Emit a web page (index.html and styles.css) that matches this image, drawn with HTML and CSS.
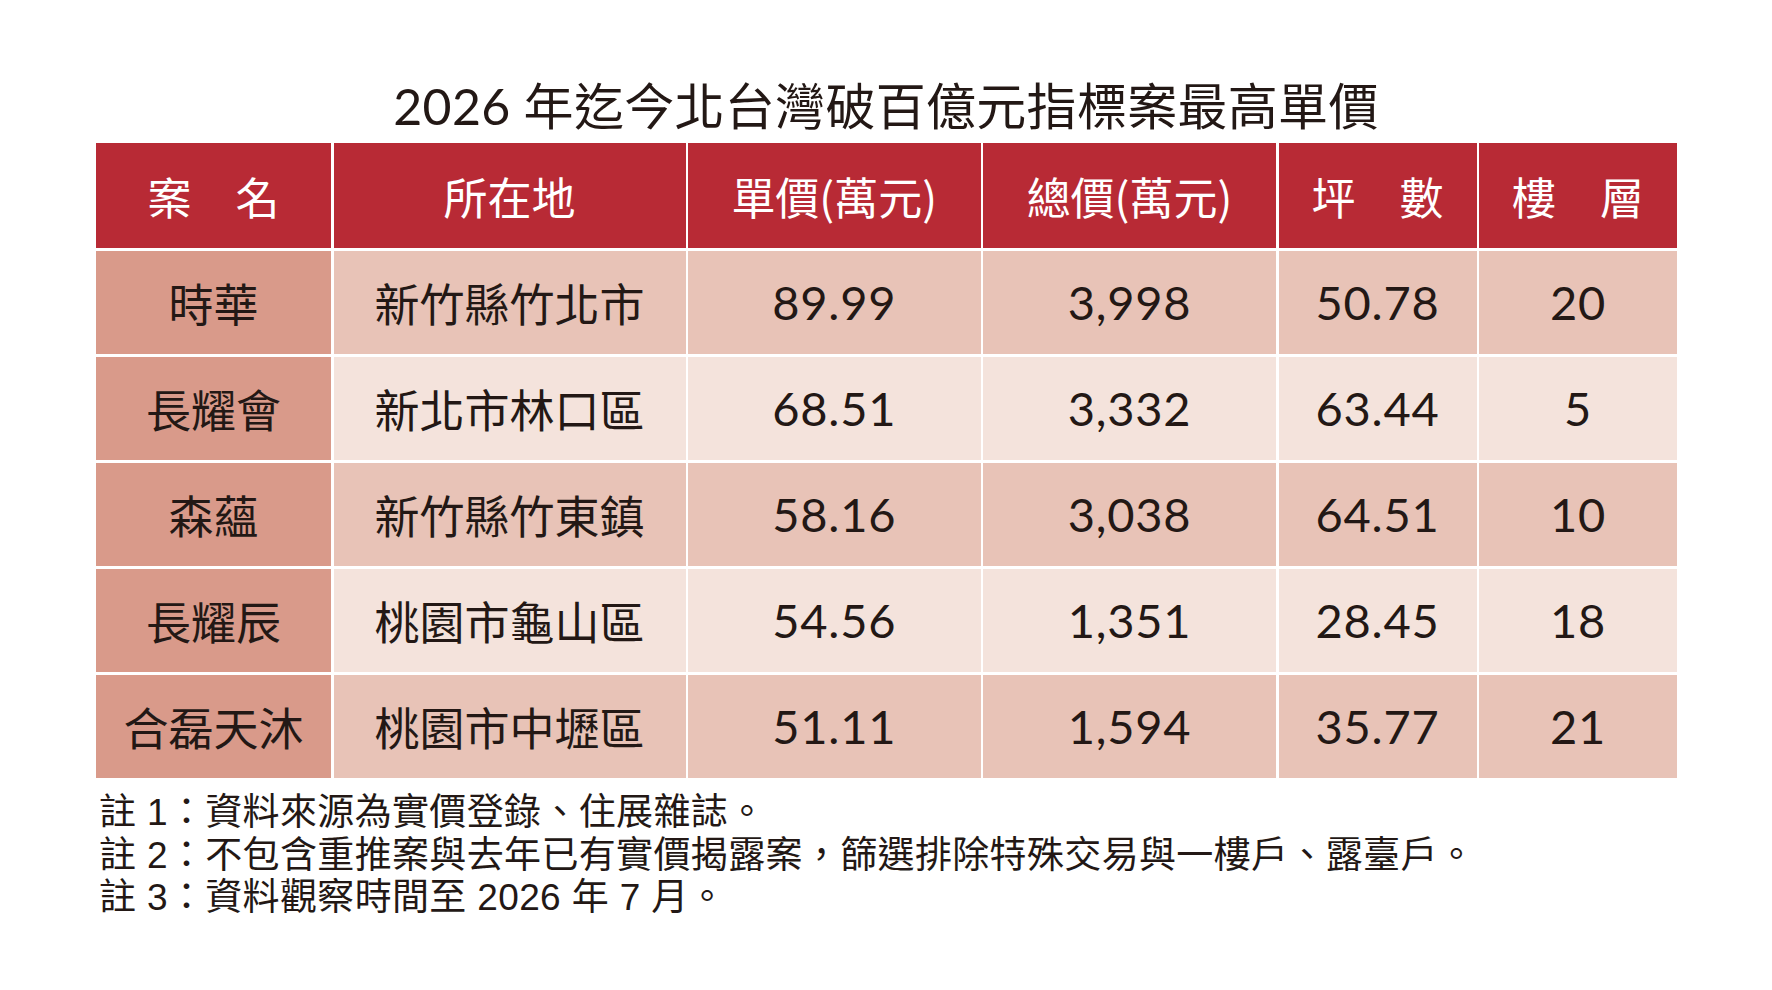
FILE: index.html
```html
<!DOCTYPE html>
<html lang="zh-Hant">
<head>
<meta charset="utf-8">
<title>2026 年迄今北台灣破百億元指標案最高單價</title>
<link rel="stylesheet" href="styles.css">
</head>
<body>
<main class="page">
  <h1 class="title">2026 年迄今北台灣破百億元指標案最高單價</h1>
  <div class="grid">
    <div class="cell head">案　名</div>
    <div class="cell head">所在地</div>
    <div class="cell head">單價(萬元)</div>
    <div class="cell head">總價(萬元)</div>
    <div class="cell head">坪　數</div>
    <div class="cell head">樓　層</div>

    <div class="cell name">時華</div>
    <div class="cell odd">新竹縣竹北市</div>
    <div class="cell odd num">89.99</div>
    <div class="cell odd num">3,998</div>
    <div class="cell odd num">50.78</div>
    <div class="cell odd num">20</div>

    <div class="cell name">長耀會</div>
    <div class="cell even">新北市林口區</div>
    <div class="cell even num">68.51</div>
    <div class="cell even num">3,332</div>
    <div class="cell even num">63.44</div>
    <div class="cell even num">5</div>

    <div class="cell name">森蘊</div>
    <div class="cell odd">新竹縣竹東鎮</div>
    <div class="cell odd num">58.16</div>
    <div class="cell odd num">3,038</div>
    <div class="cell odd num">64.51</div>
    <div class="cell odd num">10</div>

    <div class="cell name">長耀辰</div>
    <div class="cell even">桃園市龜山區</div>
    <div class="cell even num">54.56</div>
    <div class="cell even num">1,351</div>
    <div class="cell even num">28.45</div>
    <div class="cell even num">18</div>

    <div class="cell name">合磊天沐</div>
    <div class="cell odd">桃園市中壢區</div>
    <div class="cell odd num">51.11</div>
    <div class="cell odd num">1,594</div>
    <div class="cell odd num">35.77</div>
    <div class="cell odd num">21</div>
  </div>
  <div class="notes">
    <p>註 1：資料來源為實價登錄、住展雜誌。</p>
    <p>註 2：不包含重推案與去年已有實價揭露案，篩選排除特殊交易與一樓戶、露臺戶。</p>
    <p>註 3：資料觀察時間至 2026 年 7 月。</p>
  </div>
</main>
</body>
</html>
```

FILE: styles.css
```css
html, body {
  margin: 0;
  padding: 0;
  background: #ffffff;
}

body {
  color: #231815;
  font-family: "Noto Sans CJK TC", "Noto Sans CJK SC", sans-serif;
}

.page {
  width: 1580px;
  margin: 0 auto;
  padding-top: 82px;
}

.title {
  margin: 0 0 12px;
  height: 49px;
  font-family: "Lato", "Noto Sans CJK TC", sans-serif;
  font-size: 50px;
  line-height: 49px;
  font-weight: 400;
  letter-spacing: 0.3px;
  text-align: center;
  color: #231815;
  white-space: nowrap;
}

.grid {
  display: grid;
  grid-template-columns: 235px 352px 292.5px 293px 198px 198px;
  grid-template-rows: 105px repeat(5, 103.6px);
  gap: 2.5px;
  background: #ffffff;
}

.cell {
  display: flex;
  align-items: center;
  justify-content: center;
  font-size: 45px;
  line-height: 1;
  white-space: nowrap;
}

.head {
  background: #b82a35;
  color: #ffffff;
  font-size: 44px;
}

.name {
  background: #d99a8a;
}

.odd {
  background: #e8c3b7;
}

.even {
  background: #f4e3dc;
}

.num {
  font-family: "Lato", "Noto Sans CJK TC", sans-serif;
  font-size: 47px;
  letter-spacing: 0.8px;
}

.notes {
  margin-top: 14px;
  padding-left: 3px;
  font-family: "Liberation Sans", "Noto Sans CJK TC", sans-serif;
  font-size: 37px;
  letter-spacing: 0.35px;
  line-height: 42.5px;
}

.notes p {
  margin: 0;
  white-space: nowrap;
}
```
